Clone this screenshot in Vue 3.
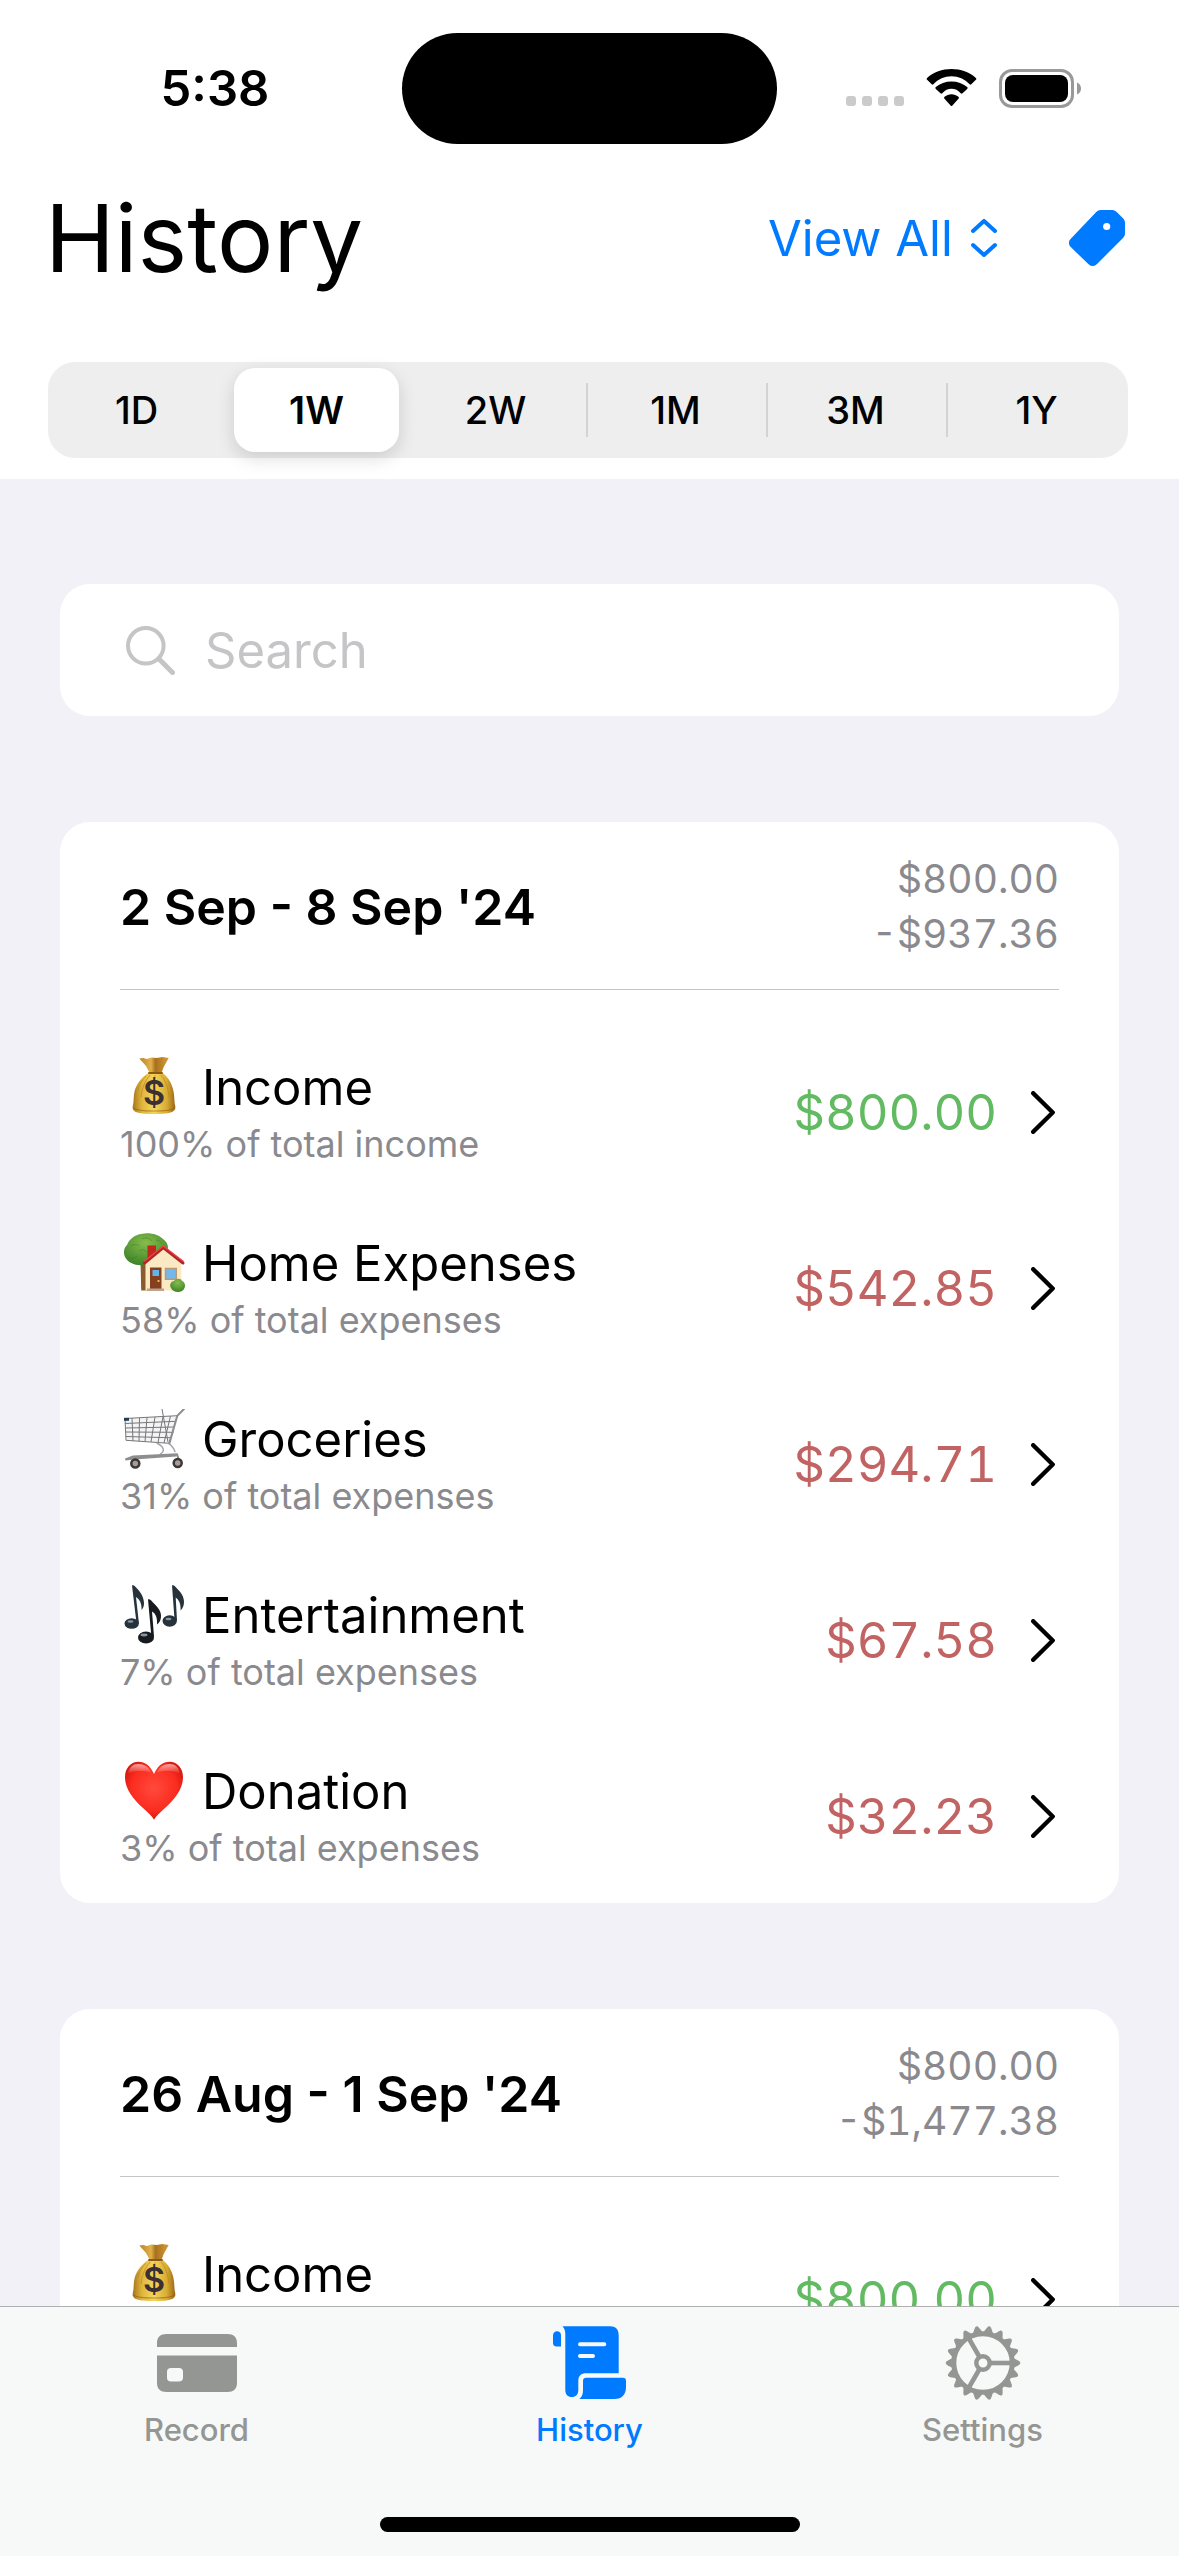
<script setup>
import { ref } from 'vue'

const ranges = ['1D', '1W', '2W', '1M', '3M', '1Y']
const range = ref('1W')
const filter = ref('all')
const query = ref('')

const periods = [
  {
    title: "2 Sep - 8 Sep '24",
    income: '$800.00',
    expenses: '-$937.36',
    rows: [
      { icon: 'money', name: 'Income', note: '100% of total income', amount: '$800.00', kind: 'in' },
      { icon: 'house', name: 'Home Expenses', note: '58% of total expenses', amount: '$542.85', kind: 'out' },
      { icon: 'cart', name: 'Groceries', note: '31% of total expenses', amount: '$294.71', kind: 'out' },
      { icon: 'notes', name: 'Entertainment', note: '7% of total expenses', amount: '$67.58', kind: 'out' },
      { icon: 'heart', name: 'Donation', note: '3% of total expenses', amount: '$32.23', kind: 'out' },
    ],
  },
  {
    title: "26 Aug - 1 Sep '24",
    income: '$800.00',
    expenses: '-$1,477.38',
    rows: [{ icon: 'money', name: 'Income', note: '100% of total income', amount: '$800.00', kind: 'in' }],
  },
]

const teeth = Array.from({ length: 18 }, (_, i) => i * 20)
</script>

<template>
  <div class="app">
    <!-- Category pictures, shared by every row -->
    <svg class="sprite" aria-hidden="true">
      <defs>
        <linearGradient id="bag" x1="0" x2="1" y1="0" y2="0">
          <stop offset="0" stop-color="#a8741c" />
          <stop offset=".22" stop-color="#e0b63c" />
          <stop offset=".5" stop-color="#f3d75c" />
          <stop offset=".8" stop-color="#d9ab32" />
          <stop offset="1" stop-color="#9a6517" />
        </linearGradient>
        <linearGradient id="frill" x1="0" x2="1" y1="0" y2="0">
          <stop offset="0" stop-color="#b98327" />
          <stop offset=".4" stop-color="#e2b14a" />
          <stop offset=".55" stop-color="#a9711d" />
          <stop offset="1" stop-color="#d49c38" />
        </linearGradient>
        <radialGradient id="leaf" cx=".5" cy=".3" r=".7">
          <stop offset="0" stop-color="#86bd4c" />
          <stop offset="1" stop-color="#3f8429" />
        </radialGradient>
        <radialGradient id="red" cx=".5" cy=".45" r=".6">
          <stop offset="0" stop-color="#ff4a3c" />
          <stop offset=".65" stop-color="#fb2c20" />
          <stop offset="1" stop-color="#cf1209" />
        </radialGradient>
        <linearGradient id="shine" x1="0" x2="0" y1="0" y2="1">
          <stop offset="0" stop-color="#fff" stop-opacity=".6" />
          <stop offset="1" stop-color="#fff" stop-opacity="0" />
        </linearGradient>
      </defs>
      <symbol id="money" viewBox="0 0 62 60">
        <path fill="url(#frill)" d="M15.300 1.500l4.200-.6 3.200 1 5-1.500 5 .6 5.500-.9 6.500 1-5 9-2 5.500H25.500L22 9z" />
        <path fill="url(#bag)" d="M25 15.500h13c7 5 11 13 12 22 .5 4 .2 8 1.300 12 .4 5-3.300 7.500-21.300 7.500S8.300 54.500 8.700 49.500c1.100-4 .8-8 1.300-12 1-9 7-17 15-22z" />
        <path fill="none" stroke="#b98422" stroke-width="1" opacity=".7" d="M26 18c-5 6-8 13-9 22M31 18c0 3-1 5-2 7M37 18c5 6 7 13 8 22M22 19c-4 4-7 9-8 14" />
        <path stroke="#8c5812" stroke-width="1.800" stroke-linecap="round" d="M25 16h13" />
        <path fill="none" stroke="#8f5d14" stroke-width="1.200" opacity=".6" d="M9 51c5 4 37 4 42 0" />
      </symbol>
      <symbol id="house" viewBox="0 0 62 60">
        <path fill="#8a5c2b" d="M16.500 28h8v29.500h-7.300z" />
        <path fill="url(#leaf)" d="M3 12C5 7 10 2 17 1c8-2 17 0 22 5 5 4 6 8 4 12L20 32C12 33 4 30 1 24-1 19 0 15 3 12z" />
        <path fill="none" stroke="#3b7d27" stroke-width="1" opacity=".5" d="M7 13c3-2 6-2 8 0M18 6c4-2 7-1 10 2M4 24c3 2 6 2 9-1M15 18c3-2 6-1 8 1M32 7c3 0 5 2 6 4" />
        <path fill="#c0271f" d="M23.500 12.500H32V25h-8.500z" />
        <path fill="#fbe9c4" d="M21.500 29L39.300 15 57.300 29v28.500H21.500z" />
        <path fill="none" stroke="#b3242a" stroke-width="3" stroke-linejoin="round" stroke-linecap="round" d="M20.500 30L39.300 14.500 59 30" />
        <path fill="none" stroke="#f0463c" stroke-width="1.300" d="M20 28.500L39.300 13 59.500 28.500" />
        <path fill="#87401f" d="M26 34.500h11.500V56H26z" />
        <path fill="#64b4e8" d="M28.500 37h6.500v6h-6.500z" />
        <path fill="#e9bb4a" d="M33.500 47h2v2h-2z" />
        <path fill="#73b8ec" stroke="#b89a76" stroke-width="1.500" d="M41.500 35.500h10.800v10.800H41.500z" />
        <path fill="#b8a58c" d="M23 55.500h17v2.500H23z" />
        <path fill="url(#leaf)" d="M47 55c-2-3 0-7 3-7 2-3 7-3 8 0 3 1 4 5 2 8-2 4-11 4-13-1z" />
      </symbol>
      <symbol id="cart" viewBox="0 0 62 60">
        <g fill="none" stroke="#77777a" stroke-width="1">
          <path d="M1 9.500L53.300 6.700 45 34.300 2 31.300z" fill="#f4f4f5" />
          <path d="M1 14.500l51-2.200M1.300 19l49.500-1M1.600 23l48 .3M1.800 27.500l46.200 1.300" />
          <path d="M8 9l1 23M15.500 9l-.5 23.300M23 8.500l-2 24.300M31 8l-4 25M39 7.700l-5 25.800M46.500 7L40 34M38 0l6 33" />
        </g>
        <path fill="none" stroke="#8e8e91" stroke-width="2" stroke-linecap="round" d="M60 0l-6.700 6.700-8 28" />
        <path fill="none" stroke="#a3a3a6" stroke-width="1.500" d="M32.700 34c4 2 7 5 6.600 7.500S36 45 36 45.500M45 34.300c4 4 6 6 6 9" />
        <path fill="none" stroke="#8e8e91" stroke-width="2" d="M1.300 50.500L9 47.600l44-2.300 2 6M9 48l2 5M1.300 50.500l9-1 42-3" />
        <path fill="#1e3d57" d="M0 8.800h5v3H0z" />
        <circle cx="11.300" cy="54.500" r="4" fill="#a69c9a" stroke="#3d3736" stroke-width="2.500" />
        <circle cx="53.700" cy="54" r="4" fill="#a69c9a" stroke="#3d3736" stroke-width="2.500" />
      </symbol>
      <symbol id="notes" viewBox="0 0 62 60">
        <g fill="#26323c">
          <g>
            <ellipse cx="7.700" cy="38.500" rx="7.200" ry="5.300" />
            <path d="M8 .5c2-1 3 1 5 3 4 4 7 9 7 15 0 3-1 5-2.500 6.500.5-6-1.500-10.500-5.500-13l2.900 26h-2.400z" />
          </g>
          <g fill="#171a1f">
            <ellipse cx="22" cy="52.500" rx="8" ry="6" />
            <path d="M24 14.500c2-1 3 1 5 3 4 4 8 8 8 13s-1.500 7-4 9c.5-6-1-11-5-13l2 25h-2.600z" />
          </g>
          <g>
            <ellipse cx="45.700" cy="36" rx="7.200" ry="5.700" />
            <path d="M48 .5c2-1 3 1 5 3 4 4 7 8 7 13.500 0 4-1.500 6.500-3.500 8.500.5-6-1-10.500-4.800-13l1.300 23h-2.400z" />
          </g>
        </g>
        <g fill="#8995a0">
          <ellipse cx="6.500" cy="36.500" rx="3" ry="1.200" />
          <ellipse cx="20" cy="50" rx="3.500" ry="1.400" />
          <ellipse cx="44.500" cy="34" rx="3" ry="1.200" />
        </g>
      </symbol>
      <symbol id="heart" viewBox="0 0 62 60">
        <path fill="url(#red)" d="M30 13C26.500 5 21 .8 14.500.8 7 .8 1 7 1 16c0 12 8 22 18 31 5 4.500 9 8 11 11.700C32 55 36 51.500 41 47c10-9 18-19 18-31C59 7 53 .8 45.500.8 39 .8 33.500 5 30 13z" />
        <path fill="url(#shine)" d="M4 13C5 6 9 3 14.500 3S25 6 27.500 12C20 9 10 9 4 13zM56 13C55 6 51 3 45.500 3S35 6 32.500 12C40 9 50 9 56 13z" />
      </symbol>
    </svg>

    <header class="top">
      <div class="status">
        <time class="clock">5:38</time>
        <div class="island"></div>
        <div class="indicators">
          <svg width="58" height="38" viewBox="0 0 58 38" fill="#cbcbcb" aria-hidden="true">
            <rect v-for="n in 4" :key="n" :x="(n - 1) * 16" y="27" width="10" height="10" rx="3" />
          </svg>
          <svg width="51" height="38" viewBox="0 0 51 38" aria-label="Wi-Fi">
            <path d="M25.500 7.300c7 0 13.300 2.700 18.100 8 .6.500 1.200.5 1.700 0l4.600-4.500c.6-.6.600-1.300 0-1.900C43.300 3 34.800 0 25.500 0S7.700 3 1.100 8.900c-.6.600-.6 1.300 0 1.900l4.600 4.500c.5.500 1.100.5 1.700 0 4.800-5.300 11.100-8 18.100-8z" />
            <path d="M25.500 19.800c3.500 0 6.500 1.300 9.200 4.500.6.600 1.200.6 1.800 0l4.700-4.400c.6-.6.600-1.200 0-1.800-4.200-3.700-9.700-5.700-15.700-5.700S14 14.400 9.800 18.100c-.6.600-.6 1.200 0 1.800l4.700 4.400c.6.600 1.200.6 1.800 0 2.700-3.200 5.700-4.500 9.200-4.500z" />
            <path d="M25.500 25.300c2.600 0 4.900.9 6.900 2.500.7.600.7 1.300.1 1.900l-6.100 6.700c-.6.700-1.200.7-1.800 0l-6.100-6.700c-.6-.6-.6-1.300.1-1.900 2-1.600 4.300-2.500 6.900-2.500z" />
          </svg>
          <svg width="82" height="39" viewBox="0 0 82 39" aria-label="Battery full">
            <rect x="1.500" y="1.500" width="72" height="36" rx="11.500" fill="none" stroke="#999" stroke-width="3" />
            <rect x="6" y="6" width="63" height="27" rx="8" />
            <path fill="#999" d="M78 13.500c2.500 1 4 3.200 4 6s-1.500 5-4 6z" />
          </svg>
        </div>
      </div>

      <div class="heading">
        <h1>History</h1>
        <label class="picker">
          <select v-model="filter" aria-label="Filter">
            <option value="all">View All</option>
          </select>
          <svg width="26" height="38" viewBox="0 0 26 38" aria-hidden="true">
            <path d="M2 12L13 2l11 10M2 26l11 10 11-10" />
          </svg>
        </label>
        <button class="tag" type="button" aria-label="Tags">
          <svg width="56" height="56" viewBox="0 0 56 56" aria-hidden="true">
            <path fill="#007aff" d="M32 0h10c2.500 0 4.300.6 6 2.300l6 6c1.600 1.600 2 3 2 5.200V23c0 2-.5 3.500-2 5L28 54c-2.700 2.700-6 2.700-8.700 0L2 37.300c-2.700-2.800-2.700-6 0-8.700L27 2.300C28.600.7 30 0 32 0z" />
            <circle cx="37.700" cy="16.500" r="3.600" fill="#fff" />
          </svg>
        </button>
      </div>

      <div class="segments" role="radiogroup" aria-label="Period length">
        <label v-for="r in ranges" :key="r" class="segment">
          <input v-model="range" type="radio" name="range" :value="r" />
          <span>{{ r }}</span>
        </label>
      </div>
    </header>

    <main class="content">
      <label class="search">
        <svg width="49" height="49" viewBox="0 0 49 49" aria-hidden="true">
          <circle cx="19.800" cy="19.800" r="17.800" stroke-width="4" />
          <path d="M33 33l13.500 13.500" stroke-width="5" />
        </svg>
        <input v-model="query" type="search" placeholder="Search" aria-label="Search" />
      </label>

      <section v-for="p in periods" :key="p.title" class="card">
        <div class="card-head">
          <h2>{{ p.title }}</h2>
          <div class="totals">
            <span>{{ p.income }}</span>
            <span>{{ p.expenses }}</span>
          </div>
        </div>
        <ul>
          <li v-for="row in p.rows" :key="row.name">
            <a href="#" class="row">
              <span class="info">
                <span class="name">
                  <svg class="emoji" viewBox="0 0 62 60" aria-hidden="true">
                    <use :href="'#' + row.icon" width="62" height="60" />
                    <text v-if="row.icon === 'money'" x="30" y="48">$</text>
                  </svg>
                  {{ row.name }}
                </span>
                <span class="note">{{ row.note }}</span>
              </span>
              <span class="amount" :class="row.kind">{{ row.amount }}</span>
              <svg class="chevron" width="24" height="43" viewBox="0 0 24 43" aria-hidden="true">
                <path d="M2.200 2.200l19.500 19.300L2.200 40.800" />
              </svg>
            </a>
          </li>
        </ul>
      </section>
    </main>

    <footer class="bottom">
      <nav class="tabs">
        <a href="#" class="tab">
          <svg width="80" height="74" viewBox="0 0 80 74" aria-hidden="true">
            <path d="M0 21v-4C0 11 3.500 8 9.500 8h61c6 0 9.500 3 9.500 9v4zM0 29.500h80V57c0 6-3.500 9-9.500 9h-61C3.500 66 0 63 0 57zM14 42c-2.500 0-4 1.300-4 3.700v6c0 2.500 1.500 3.800 4 3.800h8c2.500 0 4-1.300 4-3.800v-6c0-2.400-1.500-3.700-4-3.700z" fill-rule="evenodd" />
          </svg>
          Record
        </a>
        <a href="#" class="tab active" aria-current="page">
          <svg width="73" height="74" viewBox="0 0 73 74" aria-hidden="true">
            <path d="M8 8v12.500H3.500C1.300 20.500 0 19 0 17V9.500C0 7 1.600 5.200 4 5.200S8 6.500 8 9z" />
            <path fill-rule="evenodd" d="M9.500.3H57c5.700 0 8.700 3.200 8.700 9v38H33c-5 0-7.700 2.500-7.700 7.500V64c0 4.500-2.500 7-6.500 7s-6.500-2.600-6.500-7V8c0-3-.8-5.500-2.800-7.700zM27 16.200a2 2 0 0 0 0 4h24.300a2 2 0 0 0 0-4zM27 28a2 2 0 0 0 0 4h13a2 2 0 0 0 0-4z" />
            <path d="M26.300 73c2.700-2 3.700-5 3.700-9v-9c0-2.200 1-3.300 3.300-3.300h36.400c2.300 0 3.300 1.100 3.300 3.300v6c0 7.500-4 12-11.500 12z" />
          </svg>
          History
        </a>
        <a href="#" class="tab">
          <svg width="76" height="74" viewBox="-38 -37 76 74" aria-hidden="true">
            <circle r="29.200" fill="none" stroke="#949693" stroke-width="5" />
            <circle r="6.700" fill="none" stroke="#949693" stroke-width="4.400" />
            <path v-for="a in teeth" :key="a" :transform="`rotate(${a})`" d="M30-5.200l5.500 3c2.400 1.400 2.400 3 0 4.400l-5.500 3z" />
            <path v-for="a in [0, 120, 240]" :key="'s' + a" :transform="`rotate(${a})`" d="M7.500-2.300H28v4.600H7.500z" />
          </svg>
          Settings
        </a>
      </nav>
      <div class="home-bar"></div>
    </footer>
  </div>
</template>

<style>
body {
  margin: 0;
  background: #f2f1f7;
}
</style>

<style scoped>
.app {
  display: flex;
  flex-direction: column;
  height: 100vh;
  font-family: Inter, "Liberation Sans", sans-serif;
  font-size: 49px;
  color: #000;
  background: #f2f1f7;
}

.sprite {
  position: absolute;
  width: 0;
  height: 0;
}

svg {
  display: block;
  flex: none;
}

h1,
h2,
ul {
  margin: 0;
  padding: 0;
  list-style: none;
}

a {
  color: inherit;
  text-decoration: none;
}

.top {
  flex: none;
  padding-bottom: 21px;
  background: #fff;
}

.status {
  display: grid;
  grid-template-columns: 1fr 375px 1fr;
  align-items: center;
  padding: 33px 0;
}

.clock {
  padding-left: 28px;
  text-align: center;
  font-weight: 600;
}

.island {
  height: 111px;
  border-radius: 56px;
  background: #000;
}

.indicators {
  display: flex;
  justify-content: center;
  gap: 22px;
  padding-right: 29px;
}

.heading {
  display: flex;
  align-items: center;
  height: 122px;
  padding: 0 54px 0 45px;
}

h1 {
  flex: 1;
  font-size: 94px;
  font-weight: 400;
}

.picker {
  display: flex;
  align-items: center;
  gap: 18px;
  margin-right: 72px;
}

.picker select {
  appearance: none;
  padding: 0;
  border: 0;
  background: none;
  font: inherit;
  color: #007aff;
}

.picker path {
  fill: none;
  stroke: #007aff;
  stroke-width: 4;
  stroke-linecap: round;
  stroke-linejoin: round;
}

.tag {
  padding: 0;
  border: 0;
  background: none;
}

.segments {
  display: flex;
  height: 96px;
  margin: 63px 51px 0 48px;
  border-radius: 27px;
  background: #eee;
}

.segment {
  flex: 1;
  display: flex;
  align-items: center;
  font-size: 38px;
  font-weight: 500;
}

.segment input {
  appearance: none;
  position: absolute;
  margin: 0;
}

.segment span {
  flex: 1;
  display: grid;
  place-items: center;
  height: 84px;
  margin: 0 9px 0 6px;
  border-radius: 21px;
}

.segment input:checked + span {
  background: #fff;
  font-weight: 600;
  box-shadow: 0 6px 18px rgba(0, 0, 0, 0.14);
}

.segment:nth-child(n + 3):not(:last-child)::after {
  content: "";
  width: 2px;
  height: 54px;
  background: #d3d3d5;
}

.content {
  flex: 1;
  min-height: 0;
  display: flex;
  flex-direction: column;
  gap: 106px;
  padding: 105px 60px 0;
  overflow-y: auto;
  scrollbar-width: none;
}

.search {
  flex: none;
  display: flex;
  align-items: center;
  gap: 30px;
  height: 132px;
  padding: 0 60px 0 66px;
  border-radius: 30px;
  background: #fff;
}

.search svg {
  fill: none;
  stroke: #c5c5c7;
  stroke-linecap: round;
}

.search input {
  appearance: none;
  flex: 1;
  min-width: 0;
  padding: 0;
  border: 0;
  outline: 0;
  background: none;
  font: inherit;
}

.search input::placeholder {
  color: #c5c5c7;
}

.card {
  flex: none;
  padding: 0 60px;
  border-radius: 30px;
  background: #fff;
}

.card-head {
  display: flex;
  align-items: center;
  justify-content: space-between;
  height: 167px;
  margin-bottom: 33px;
  border-bottom: 1px solid #c6c6c8;
}

h2 {
  padding-top: 2px;
  font-size: 50px;
  font-weight: 600;
}

.totals {
  display: flex;
  flex-direction: column;
  text-align: right;
  font-size: 39px;
  line-height: 55px;
  font-variant-numeric: tabular-nums;
  color: #8a8a8e;
}

.row {
  box-sizing: border-box;
  display: flex;
  align-items: center;
  height: 176px;
  padding: 2px 4px 0 0;
}

.info {
  flex: 1;
  display: flex;
  flex-direction: column;
  gap: 6px;
}

.name {
  display: flex;
  align-items: center;
  gap: 16px;
  height: 58px;
}

.emoji {
  width: 62px;
  height: 60px;
  margin-left: 4px;
}

.emoji text {
  font-size: 34px;
  font-weight: 600;
  text-anchor: middle;
  fill: #3c3033;
}

.note {
  font-size: 36px;
  line-height: 44px;
  color: #8a8a8e;
}

.amount {
  margin-right: 34px;
  font-variant-numeric: tabular-nums;
}

.in {
  color: #62ba62;
}

.out {
  color: #c26363;
}

.chevron path {
  fill: none;
  stroke: #000;
  stroke-width: 4.400;
  stroke-linecap: round;
  stroke-linejoin: round;
}

.bottom {
  flex: none;
  display: flex;
  flex-direction: column;
  align-items: center;
  padding-bottom: 24px;
  border-top: 1px solid #b0b0b1;
  background: #f7f8f8;
}

.tabs {
  align-self: stretch;
  display: flex;
  height: 210px;
}

.tab {
  flex: 1;
  display: flex;
  flex-direction: column;
  align-items: center;
  gap: 12px;
  padding-top: 19px;
  font-size: 31px;
  font-weight: 500;
  line-height: 36px;
  color: #949693;
  fill: #949693;
}

.active {
  color: #007aff;
  fill: #007aff;
}

.home-bar {
  width: 420px;
  height: 15px;
  border-radius: 8px;
  background: #000;
}
</style>
